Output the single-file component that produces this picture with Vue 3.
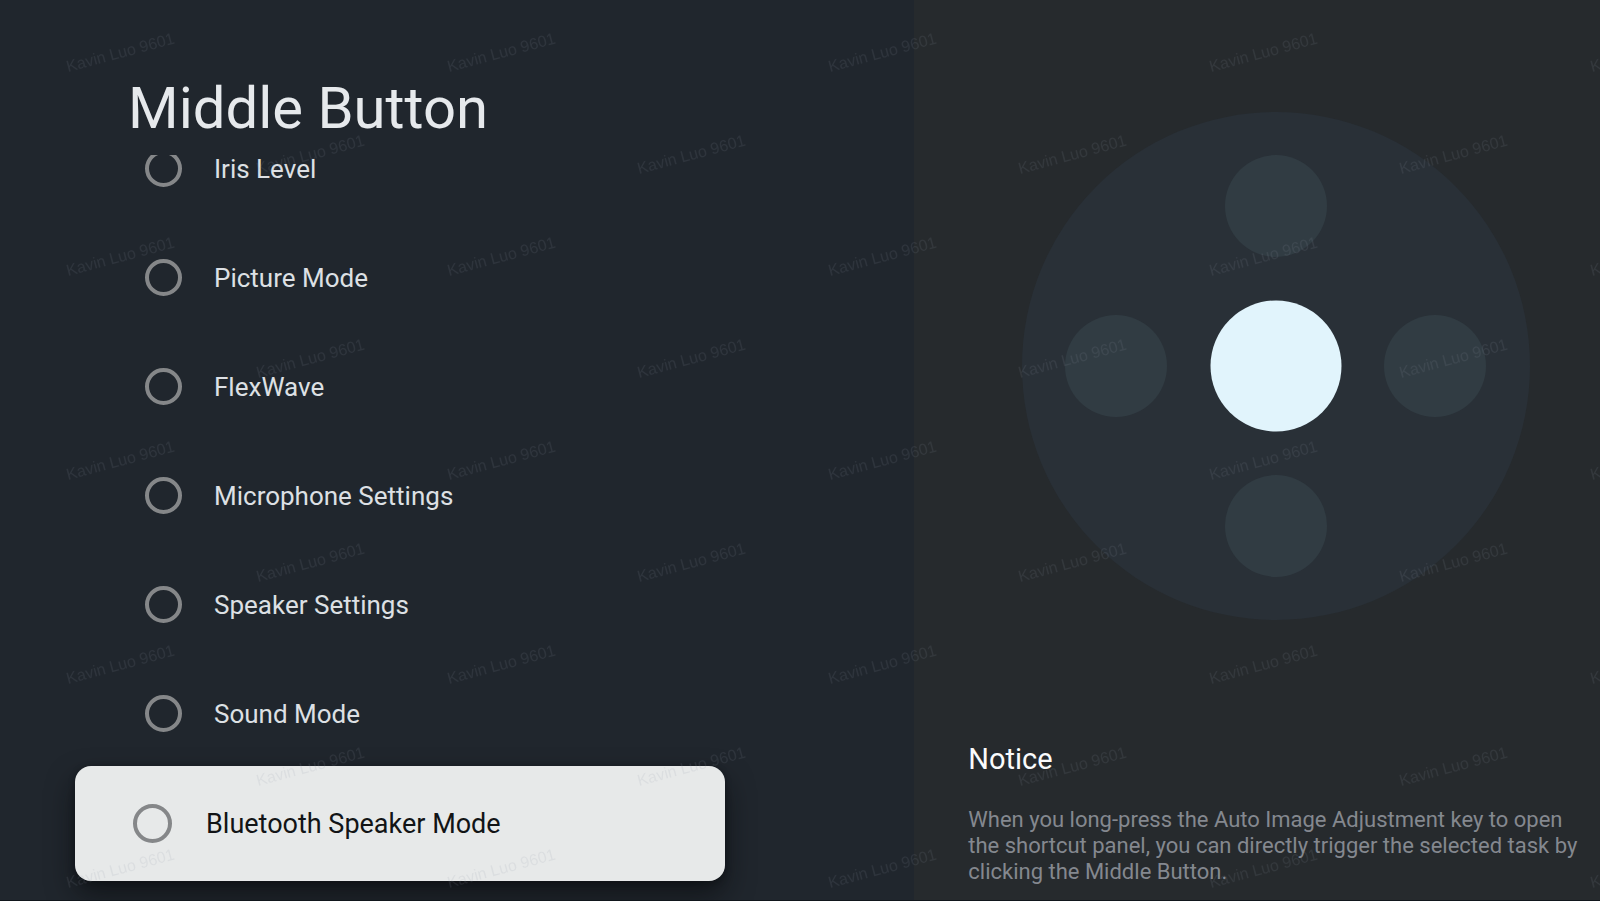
<script setup>
import { ref } from 'vue'

const options = [
  'Iris Level',
  'Picture Mode',
  'FlexWave',
  'Microphone Settings',
  'Speaker Settings',
  'Sound Mode',
  'Bluetooth Speaker Mode',
]
const focused = ref('Bluetooth Speaker Mode')
const selected = ref('')
</script>

<template>
  <main class="screen">
    <section class="panel">
      <h1 class="title">Middle Button</h1>
      <div class="viewport">
        <ul class="options">
          <li v-for="name in options" :key="name">
            <label class="option" :class="{ focused: name === focused }">
              <input v-model="selected" class="radio" type="radio" name="shortcut" :value="name" />
              <span>{{ name }}</span>
            </label>
          </li>
        </ul>
      </div>
    </section>

    <aside class="info">
      <svg class="dial" viewBox="0 0 508 508" aria-hidden="true">
        <circle cx="254" cy="254" r="254" fill="#293037" />
        <g fill="#313c43">
          <circle cx="254" cy="94" r="51" />
          <circle cx="94" cy="254" r="51" />
          <circle cx="413" cy="254" r="51" />
          <circle cx="254" cy="414" r="51" />
        </g>
        <circle cx="254" cy="254" r="65.5" fill="#e1f4fc" />
      </svg>
      <div class="notice">
        <h2>Notice</h2>
        <p>
          When you long-press the Auto Image Adjustment key to open the shortcut panel, you can
          directly trigger the selected task by clicking the Middle Button.
        </p>
      </div>
    </aside>

    <svg class="watermark" aria-hidden="true">
      <defs>
        <pattern id="mark" width="381" height="204" patternUnits="userSpaceOnUse">
          <text x="68" y="72" transform="rotate(-15 68 72)">Kavin Luo 9601</text>
          <text x="258" y="174" transform="rotate(-15 258 174)">Kavin Luo 9601</text>
        </pattern>
      </defs>
      <rect width="100%" height="100%" fill="url(#mark)" />
    </svg>
  </main>
</template>

<style>
body {
  margin: 0;
  background: #20262d;
}
</style>

<style scoped>
.screen {
  position: relative;
  box-sizing: border-box;
  display: grid;
  grid-template-columns: 4fr 3fr;
  min-height: 100vh;
  border-bottom: 1px solid #11161c;
  background: #20262d;
  font-family: Roboto, "Liberation Sans", sans-serif;
}

.panel {
  display: flex;
  flex-direction: column;
}

.title {
  margin: 0;
  padding: 72px 0 11px 128px;
  font-size: 58px;
  line-height: 72px;
  font-weight: 400;
  color: #e6e9ec;
}

.viewport {
  flex: 1;
  overflow: hidden;
  padding: 0 189px 19px 75px;
}

.options {
  margin: -41px 0 0;
  padding: 0;
  list-style: none;
}

.option {
  box-sizing: border-box;
  display: flex;
  align-items: center;
  gap: 32px;
  height: 109px;
  padding-left: 70px;
  font-size: 26px;
  line-height: 32px;
  color: #dde0e4;
}

.radio {
  appearance: none;
  box-sizing: border-box;
  flex: none;
  width: 37px;
  height: 37px;
  margin: 0;
  border: 4px solid #858789;
  border-radius: 50%;
}

.radio:checked {
  background: radial-gradient(circle, #858789 40%, transparent 44%);
}

.option.focused {
  gap: 34px;
  height: 115px;
  margin-top: -2px;
  padding-left: 58px;
  border-radius: 16px;
  background: #e7e9e9;
  box-shadow: 0 14px 28px rgba(8, 10, 12, 0.6), 0 2px 6px rgba(8, 10, 12, 0.4);
  font-size: 27px;
  color: #121416;
}

.option.focused .radio {
  width: 39px;
  height: 39px;
}

.info {
  display: flex;
  flex-direction: column;
  justify-content: space-between;
  padding: 112px 17px 15px 54px;
  background: #262a2d;
}

.dial {
  align-self: center;
  width: 508px;
  max-width: 100%;
}

.notice h2 {
  margin: 0 0 31px;
  font-size: 29px;
  line-height: 34px;
  font-weight: 400;
  color: #fafbfc;
}

.notice p {
  margin: 0;
  font-size: 22px;
  line-height: 26px;
  color: #84888f;
}

.watermark {
  position: absolute;
  inset: 0;
  width: 100%;
  height: 100%;
  pointer-events: none;
}

.watermark text {
  font-family: "Liberation Sans", Arial, sans-serif;
  font-size: 16px;
  fill: rgba(140, 150, 160, 0.13);
}
</style>
